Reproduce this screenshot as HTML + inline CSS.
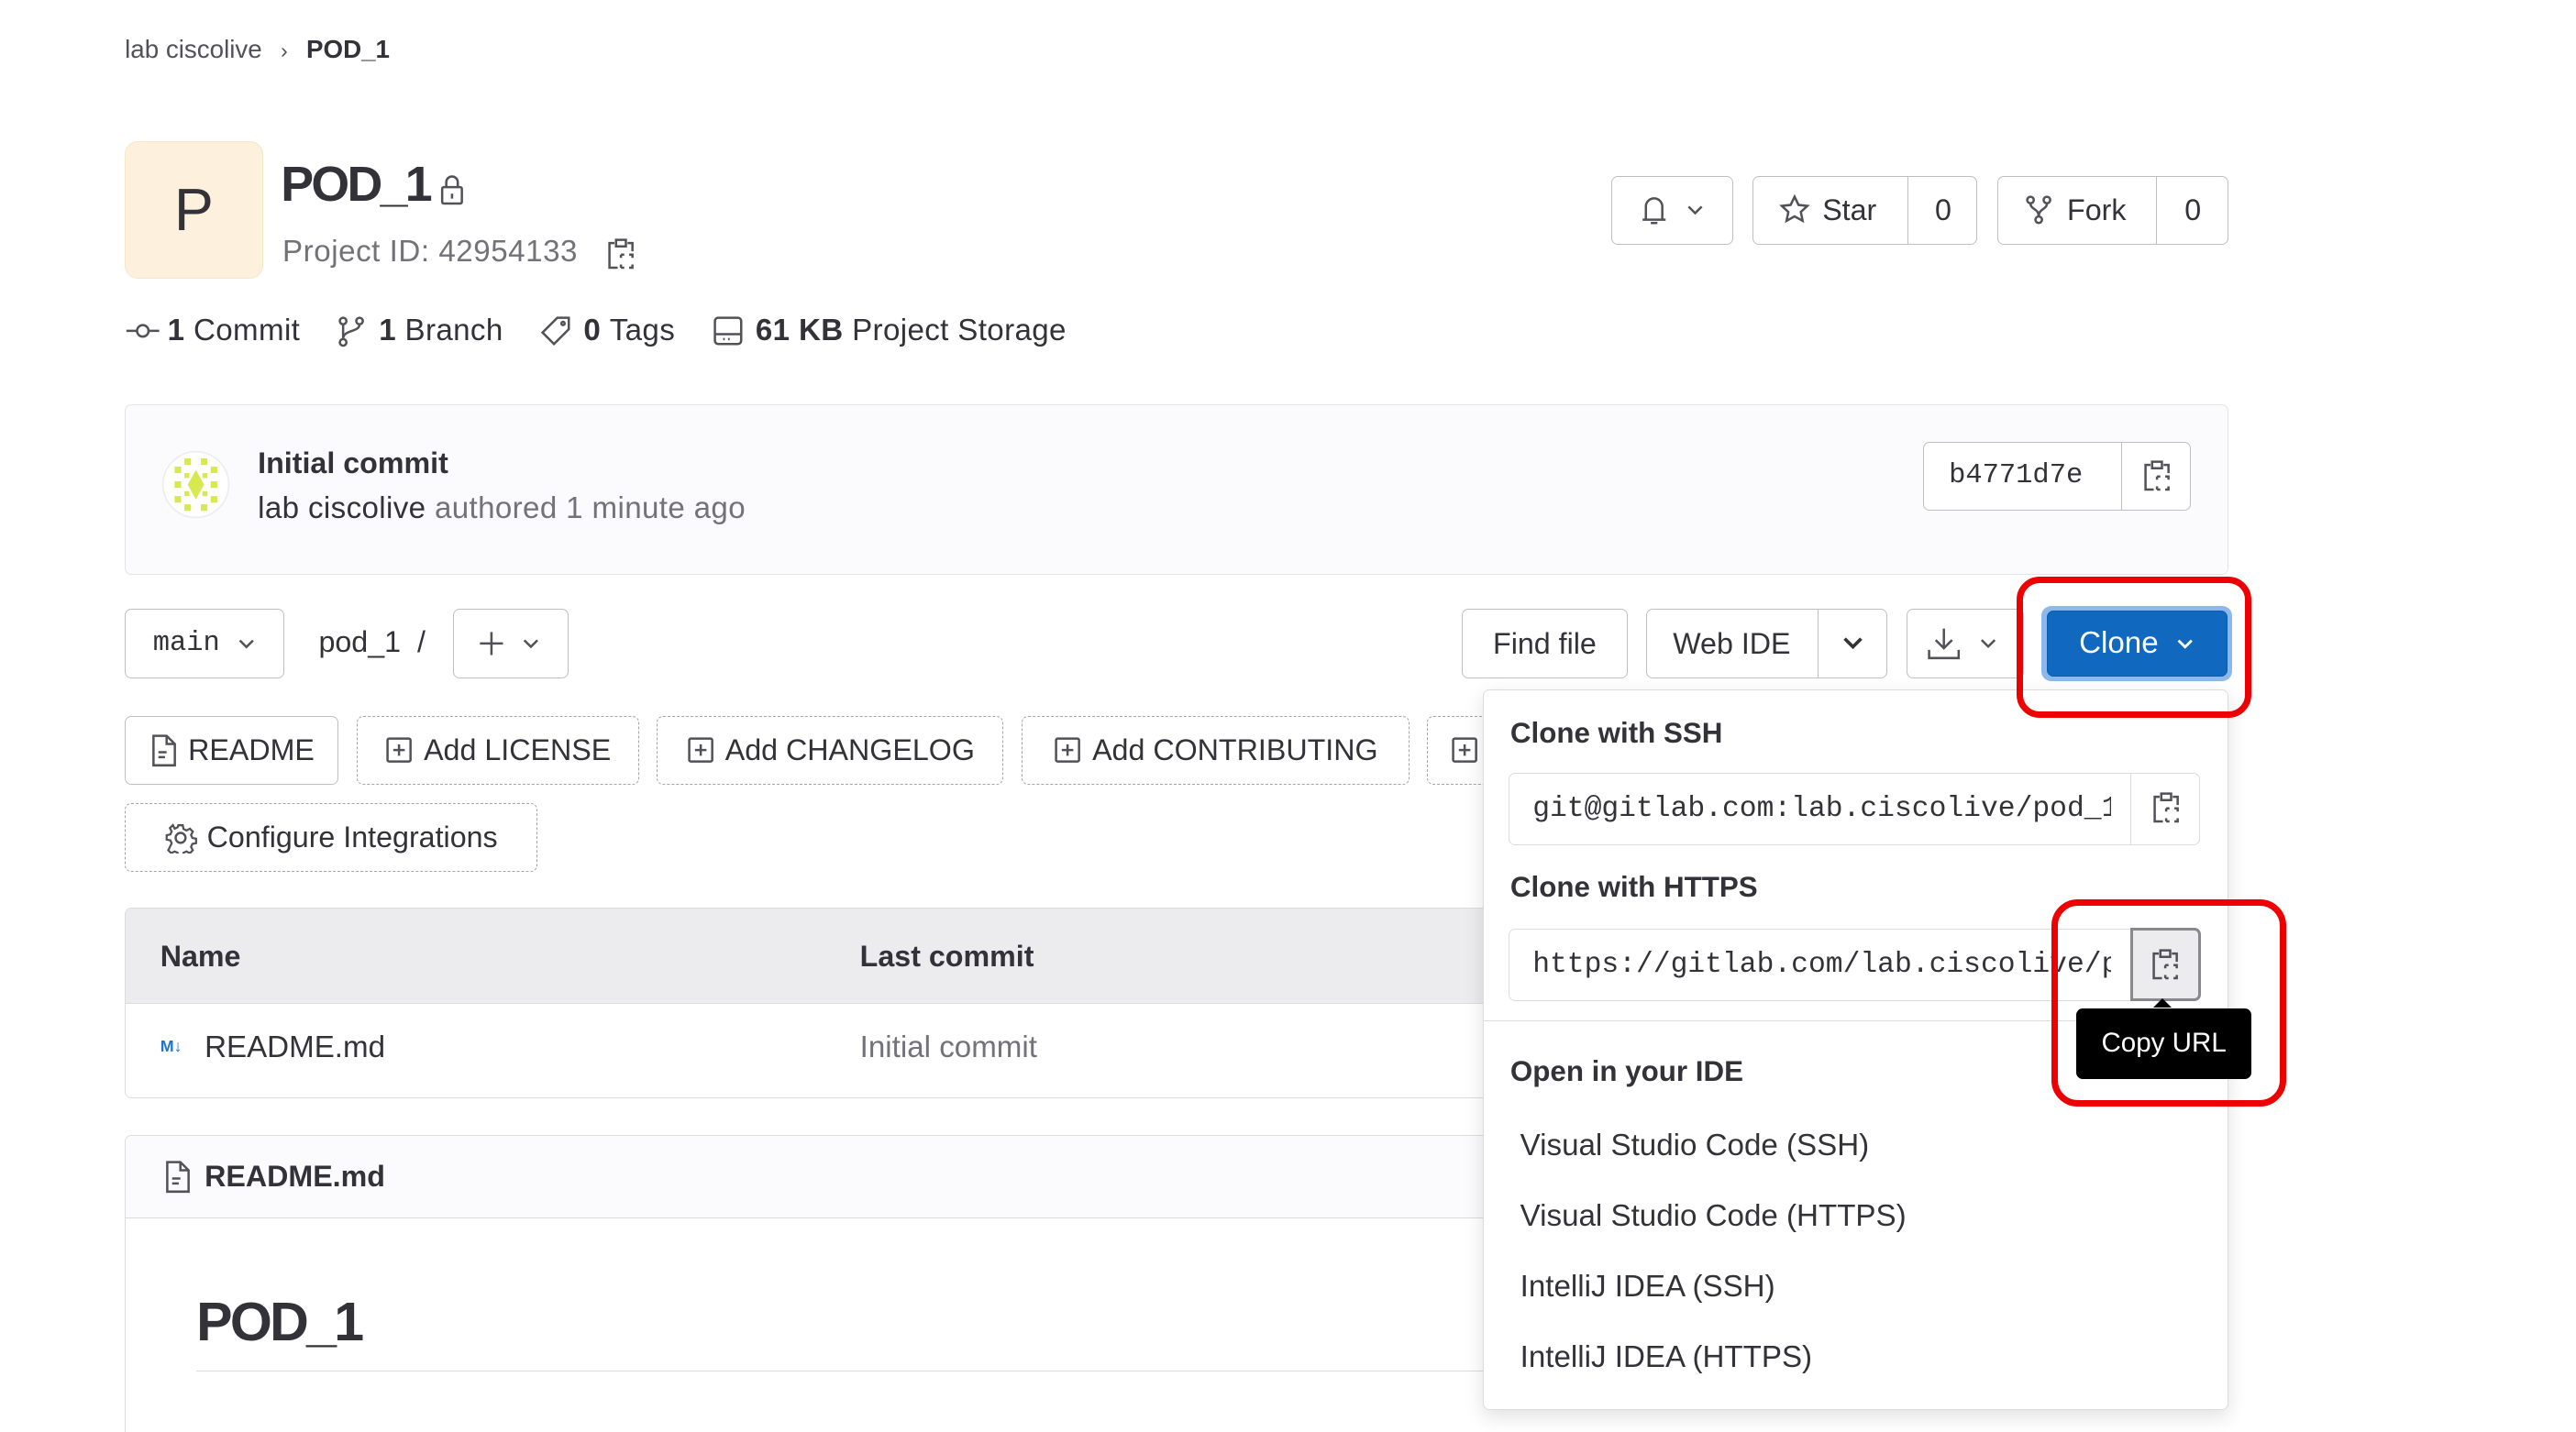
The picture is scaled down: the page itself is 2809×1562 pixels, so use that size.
<!DOCTYPE html>
<html><head><meta charset="utf-8"><style>
html,body{margin:0;padding:0;background:#fff;overflow:hidden}
body{width:2809px;height:1562px}
#w{zoom:1.791;width:1570px;height:873px;position:relative;font-family:"Liberation Sans",sans-serif;color:#333238}
.a{position:absolute}
.btn{position:absolute;box-sizing:border-box;border:1px solid #bfbfc3;border-radius:4px;background:#fff;display:flex;align-items:center;justify-content:center;font-size:18px;color:#333238}
.dash{border:1px dashed #a4a3a8}
.mono{font-family:"Liberation Mono",monospace}
svg{display:block}
.ic{stroke:#535158;fill:none;stroke-width:1.4}
.h{font-weight:bold;font-size:17.5px}
.it{position:absolute;left:22px;font-size:18.5px}
</style></head><body><div id="w">
<div class="a" style="left:76px;top:21px;font-size:15.5px;color:#535158">lab ciscolive <span style="margin:0 7px;font-size:13px">›</span> <b style="color:#333238">POD_1</b></div>
<div class="a" style="left:76px;top:86px;width:84px;height:84px;background:#fdf0dc;border:1px solid #f5e6cc;border-radius:8px;box-sizing:border-box;display:flex;align-items:center;justify-content:center;font-size:36px">P</div>
<div class="a" style="left:171px;top:95px;font-size:30px;font-weight:bold;letter-spacing:-1.5px">POD_1</div>
<svg class="a" style="left:265px;top:105px" width="20" height="22" viewBox="0 0 20 22"><rect class="ic" x="4" y="9" width="12" height="10" rx="1"/><path class="ic" d="M6.5 9V6a3.5 3.5 0 0 1 7 0v3M10 13v3"/></svg>
<div class="a" style="left:172px;top:143px;font-size:18.5px;color:#737278;letter-spacing:0.3px">Project ID: 42954133</div>
<svg class="a" style="left:369px;top:144px" width="18" height="22" viewBox="0 0 18 22"><path class="ic" d="M5 4H2v15h5M13 4h3v5M6 2h6v4H6z"/><path class="ic" d="M9 11h2M14 11h2v2M9 19h2M16 17v2h-2M9 11v2M9 17v2"/></svg>
<div class="btn" style="left:981px;top:107px;width:74px;height:42px"><svg width="44" height="20" viewBox="0 0 44 20"><path class="ic" d="M4 16h14M6 16V8a5 5 0 0 1 10 0v8M9 18h4"/><path class="ic" d="M32 8l4 4 4-4"/></svg></div>
<div class="btn" style="left:1067px;top:107px;width:137px;height:42px;justify-content:flex-start"><svg style="margin-left:15px" width="20" height="20" viewBox="0 0 20 20"><path class="ic" d="M10 2l2.4 5 5.4.6-4 3.7 1.1 5.4L10 14l-4.9 2.7 1.1-5.4-4-3.7 5.4-.6z"/></svg><span style="margin-left:7px">Star</span><span style="position:absolute;left:94px;top:0;bottom:0;border-left:1px solid #bfbfc3;width:42px;display:flex;align-items:center;justify-content:center">0</span></div>
<div class="btn" style="left:1216px;top:107px;width:141px;height:42px;justify-content:flex-start"><svg style="margin-left:16px" width="18" height="20" viewBox="0 0 18 20"><circle class="ic" cx="4" cy="4" r="2"/><circle class="ic" cx="14" cy="4" r="2"/><circle class="ic" cx="9" cy="16" r="2"/><path class="ic" d="M4 6c0 4 5 3 5 8M14 6c0 4-5 3-5 8"/></svg><span style="margin-left:8px">Fork</span><span style="position:absolute;left:96px;top:0;bottom:0;border-left:1px solid #bfbfc3;width:44px;display:flex;align-items:center;justify-content:center">0</span></div>
<div class="a" style="left:76px;top:191px;font-size:18.5px;display:flex;align-items:center;white-space:nowrap;letter-spacing:0.2px">
<svg width="22" height="20" viewBox="0 0 22 20"><circle class="ic" cx="11" cy="10" r="3.5"/><path class="ic" d="M1 10h6.5M14.5 10H21"/></svg><b style="margin-left:4px">1</b>&nbsp;Commit
<svg style="margin-left:22px" width="18" height="20" viewBox="0 0 18 20"><circle class="ic" cx="4" cy="4" r="2"/><circle class="ic" cx="14" cy="4" r="2"/><circle class="ic" cx="4" cy="17" r="2"/><path class="ic" d="M4 6v9M14 6c0 5-10 3-10 9"/></svg><b style="margin-left:8px">1</b>&nbsp;Branch
<svg style="margin-left:22px" width="20" height="20" viewBox="0 0 20 20"><path class="ic" d="M11 2h7v7l-9 9-7-7z"/><circle class="ic" cx="14.5" cy="5.5" r="1"/></svg><b style="margin-left:7px">0</b>&nbsp;Tags
<svg style="margin-left:22px" width="20" height="20" viewBox="0 0 20 20"><rect class="ic" x="2" y="2" width="16" height="16" rx="2"/><path class="ic" d="M2 12h16M7 15h1M10 15h1"/></svg><b style="margin-left:7px">61 KB</b>&nbsp;Project Storage</div>
<div class="a" style="left:76px;top:246px;width:1281px;height:104px;box-sizing:border-box;background:#fbfafd;border:1px solid #e4e4e6;border-radius:4px"></div>
<svg class="a" style="left:98px;top:274px" width="42" height="42" viewBox="0 0 42 42"><circle cx="21" cy="21" r="20" fill="#fff" stroke="#eee"/><g fill="#d8e84f"><rect x="8" y="10" width="4" height="4"/><rect x="8" y="19" width="4" height="4"/><rect x="8" y="28" width="4" height="4"/><rect x="30" y="10" width="4" height="4"/><rect x="30" y="19" width="4" height="4"/><rect x="30" y="28" width="4" height="4"/><rect x="14" y="5" width="4" height="4"/><rect x="24" y="5" width="4" height="4"/><rect x="14" y="33" width="4" height="4"/><rect x="24" y="33" width="4" height="4"/><path d="M21 12l5 9-5 9-5-9z"/><rect x="14" y="14" width="3" height="3"/><rect x="25" y="14" width="3" height="3"/><rect x="14" y="25" width="3" height="3"/><rect x="25" y="25" width="3" height="3"/></g></svg>
<div class="a" style="left:157px;top:272px;font-size:18px;font-weight:bold">Initial commit</div>
<div class="a" style="left:157px;top:299px;font-size:18.5px;letter-spacing:0.2px">lab ciscolive <span style="color:#737278">authored 1 minute ago</span></div>
<div class="btn mono" style="left:1171px;top:269px;width:163px;height:42px;justify-content:flex-start;font-size:17px"><span style="margin-left:15px">b4771d7e</span><span style="position:absolute;left:120px;top:0;bottom:0;border-left:1px solid #bfbfc3;width:42px;display:flex;align-items:center;justify-content:center"><svg width="18" height="22" viewBox="0 0 18 22"><path class="ic" d="M5 4H2v15h5M13 4h3v5M6 2h6v4H6z"/><path class="ic" d="M9 11h2M14 11h2v2M9 19h2M16 17v2h-2M9 11v2M9 17v2"/></svg></span></div>
<div class="btn mono" style="left:76px;top:371px;width:97px;height:42px;font-size:17px">main<svg style="margin-left:10px" width="12" height="8" viewBox="0 0 12 8"><path class="ic" d="M2 2l4 4 4-4"/></svg></div>
<div class="a" style="left:194px;top:381px;font-size:18px">pod_1 &nbsp;/</div>
<div class="btn" style="left:276px;top:371px;width:70px;height:42px"><svg width="44" height="20" viewBox="0 0 44 20"><path class="ic" d="M10 3v14M3 10h14"/><path class="ic" d="M30 8l4 4 4-4"/></svg></div>
<div class="btn" style="left:890px;top:371px;width:101px;height:42px">Find file</div>
<div class="btn" style="left:1002px;top:371px;width:147px;height:42px;justify-content:flex-start"><span style="margin-left:16px">Web IDE</span><span style="position:absolute;left:104px;top:0;bottom:0;border-left:1px solid #bfbfc3;width:42px;display:flex;align-items:center;justify-content:center"><svg width="14" height="10" viewBox="0 0 14 10"><path d="M2 2l5 5 5-5" stroke="#333" stroke-width="2" fill="none"/></svg></span></div>
<div class="btn" style="left:1161px;top:371px;width:71px;height:42px"><svg width="48" height="22" viewBox="0 0 48 22"><path class="ic" d="M11 2v12M6 9l5 5 5-5M2 15v5h18v-5"/><path class="ic" d="M34 9l4 4 4-4"/></svg></div>
<div class="a" style="left:1243px;top:369px;width:116px;height:46px;border-radius:6px;background:#8db8ec"></div>
<div class="btn" style="left:1246px;top:372px;width:110px;height:40px;background:#1068bf;border-color:#0b5cad;color:#fff;font-size:18.5px">Clone<svg style="margin-left:10px" width="12" height="8" viewBox="0 0 12 8"><path d="M2 2l4 4 4-4" stroke="#fff" stroke-width="1.6" fill="none"/></svg></div>
<div class="btn" style="left:76px;top:436px;width:130px;height:42px"><svg width="18" height="22" viewBox="0 0 18 22"><path class="ic" d="M3 2h8l5 5v13H3zM11 2v5h5M6 12h5M6 15h4"/></svg><span style="margin-left:6px">README</span></div>
<div class="btn dash" style="left:217px;top:436px;width:172px;height:42px"><svg width="18" height="18" viewBox="0 0 18 18"><rect class="ic" x="2" y="2" width="14" height="14" rx="1"/><path class="ic" d="M9 5.5v7M5.5 9h7"/></svg><span style="margin-left:6px">Add LICENSE</span></div>
<div class="btn dash" style="left:400px;top:436px;width:211px;height:42px"><svg width="18" height="18" viewBox="0 0 18 18"><rect class="ic" x="2" y="2" width="14" height="14" rx="1"/><path class="ic" d="M9 5.5v7M5.5 9h7"/></svg><span style="margin-left:6px">Add CHANGELOG</span></div>
<div class="btn dash" style="left:622px;top:436px;width:236px;height:42px"><svg width="18" height="18" viewBox="0 0 18 18"><rect class="ic" x="2" y="2" width="14" height="14" rx="1"/><path class="ic" d="M9 5.5v7M5.5 9h7"/></svg><span style="margin-left:6px">Add CONTRIBUTING</span></div>
<div class="btn dash" style="left:869px;top:436px;width:60px;height:42px;justify-content:flex-start"><svg style="margin-left:13px" width="18" height="18" viewBox="0 0 18 18"><rect class="ic" x="2" y="2" width="14" height="14" rx="1"/><path class="ic" d="M9 5.5v7M5.5 9h7"/></svg></div>
<div class="btn dash" style="left:76px;top:489px;width:251px;height:42px"><svg width="20" height="20" viewBox="0 0 20 20"><circle class="ic" cx="10" cy="10" r="3"/><path class="ic" d="M8.5 1.5h3l.5 2.5 2 1 2.3-1.2 2 2-1.2 2.3.9 2 2.5.5v3l-2.5.5-.9 2 1.2 2.3-2 2-2.3-1.2-2 .9-.5 2.5h-3l-.5-2.5-2-.9-2.3 1.2-2-2L4 13.7l-.9-2-2.5-.5v-3l2.5-.5.9-2-1.2-2.3 2-2L6 3.8l2-.9z" transform="scale(.9) translate(1.1 1.1)"/></svg><span style="margin-left:6px">Configure Integrations</span></div>
<div class="a" style="left:76px;top:553px;width:880px;height:116px;box-sizing:border-box;border:1px solid #dcdcde;border-radius:4px;overflow:hidden">
<div style="height:57px;background:#ececef;border-bottom:1px solid #dcdcde;position:relative"><b class="a" style="left:21px;top:19px;font-size:18px">Name</b><b class="a" style="left:447px;top:19px;font-size:18px">Last commit</b></div>
<div class="a" style="left:21px;top:78px;font-size:10px;font-weight:bold;color:#1f75cb">M↓</div>
<div class="a" style="left:48px;top:74px;font-size:18.5px">README.md</div>
<div class="a" style="left:447px;top:74px;font-size:18.5px;color:#737278">Initial commit</div></div>
<div class="a" style="left:76px;top:691px;width:880px;height:200px;box-sizing:border-box;border:1px solid #dcdcde;border-right:none;border-radius:4px 0 0 4px;overflow:hidden">
<div style="height:50px;background:#fbfafd;border-bottom:1px solid #dcdcde;position:relative"><svg class="a" style="left:22px;top:14px" width="18" height="22" viewBox="0 0 18 22"><path class="ic" d="M3 2h8l5 5v13H3zM11 2v5h5M6 12h5M6 15h4"/></svg><b class="a" style="left:48px;top:15px;font-size:18px">README.md</b></div>
<div class="a" style="left:43px;top:94px;font-size:33px;font-weight:bold;letter-spacing:-1.5px">POD_1</div>
<div class="a" style="left:43px;top:143px;width:900px;border-top:1px solid #dcdcde"></div></div>
<div class="a" style="left:903px;top:420px;width:454px;height:439px;background:#fff;border:1px solid #dcdcde;border-radius:4px;box-shadow:0 4px 12px rgba(0,0,0,.12);box-sizing:border-box">
<div class="a h" style="left:16px;top:16px">Clone with SSH</div>
<div class="a" style="left:15px;top:50px;width:421px;height:44px;border:1px solid #dcdcde;border-radius:4px;box-sizing:border-box;overflow:hidden"><div class="a mono" style="left:14px;top:12px;width:352px;overflow:hidden;white-space:nowrap;font-size:17.5px">git@gitlab.com:lab.ciscolive/pod_1.git</div><div class="a" style="left:378px;top:0;bottom:0;width:42px;border-left:1px solid #dcdcde;display:flex;align-items:center;justify-content:center"><svg width="18" height="22" viewBox="0 0 18 22"><path class="ic" d="M5 4H2v15h5M13 4h3v5M6 2h6v4H6z"/><path class="ic" d="M9 11h2M14 11h2v2M9 19h2M16 17v2h-2M9 11v2M9 17v2"/></svg></div></div>
<div class="a h" style="left:16px;top:110px">Clone with HTTPS</div>
<div class="a" style="left:15px;top:145px;width:421px;height:44px;border:1px solid #dcdcde;border-radius:4px;box-sizing:border-box"><div class="a mono" style="left:14px;top:12px;width:352px;overflow:hidden;white-space:nowrap;font-size:17.5px">https://gitlab.com/lab.ciscolive/pod_1.git</div><div class="a" style="left:378px;top:-1px;bottom:-1px;width:43px;border:2px solid #89888d;border-radius:0 4px 4px 0;background:#ececef;box-sizing:border-box;display:flex;align-items:center;justify-content:center"><svg width="18" height="22" viewBox="0 0 18 22"><path class="ic" d="M5 4H2v15h5M13 4h3v5M6 2h6v4H6z"/><path class="ic" d="M9 11h2M14 11h2v2M9 19h2M16 17v2h-2M9 11v2M9 17v2"/></svg></div></div>
<div class="a" style="left:0;right:0;top:201px;border-top:1px solid #dcdcde"></div>
<div class="a h" style="left:16px;top:222px">Open in your IDE</div>
<div class="it" style="top:267px">Visual Studio Code (SSH)</div>
<div class="it" style="top:310px">Visual Studio Code (HTTPS)</div>
<div class="it" style="top:353px">IntelliJ IDEA (SSH)</div>
<div class="it" style="top:396px">IntelliJ IDEA (HTTPS)</div>
</div>
<div class="a" style="left:1311px;top:608px;width:0;height:0;border:6px solid transparent;border-bottom-color:#000;border-top:0"></div>
<div class="a" style="left:1264px;top:614px;width:107px;height:43px;background:#000;border-radius:4px;color:#fff;font-size:16.5px;display:flex;align-items:center;justify-content:center">Copy URL</div>
<div class="a" style="left:1228px;top:351px;width:143px;height:86px;border:4px solid #ee0000;border-radius:14px;box-sizing:border-box"></div>
<div class="a" style="left:1249px;top:548px;width:143px;height:126px;border:4px solid #ee0000;border-radius:16px;box-sizing:border-box"></div>
</div></body></html>
